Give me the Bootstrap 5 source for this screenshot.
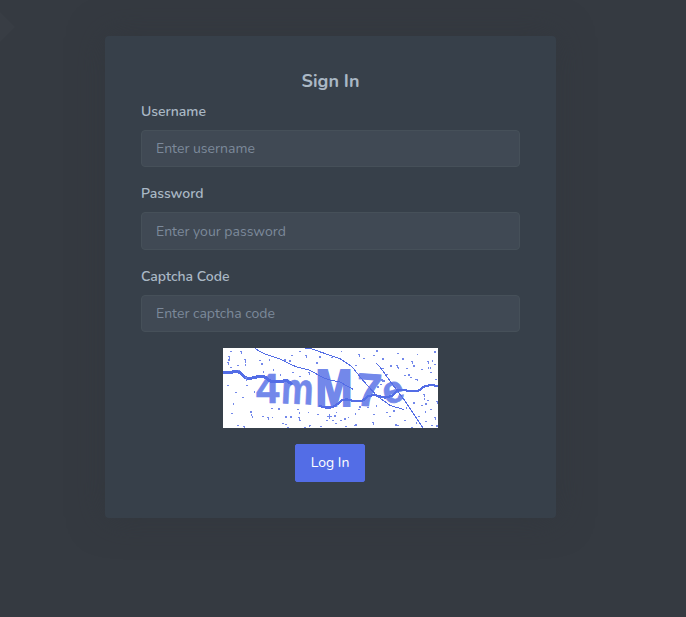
<!DOCTYPE html>
<html lang="en">
<head>
<meta charset="utf-8">
<meta name="viewport" content="width=device-width, initial-scale=1">
<title>Sign In</title>
<link href="https://cdn.jsdelivr.net/npm/bootstrap@5.3.0/dist/css/bootstrap.min.css" rel="stylesheet">
<style>
body{background:#353a41;color:#aab8c5;font-family:Nunito,Lato,"Open Sans",sans-serif;font-size:14px;min-height:617px;overflow:hidden}
/* faint diamond of the backdrop pattern */
body::before{content:"";position:absolute;left:0;top:0;width:16px;height:42px;background:#383d44;clip-path:polygon(0 12px,15px 27px,0 42px)}
.login-card{width:451px;height:482px;margin:36px 0 0 105px;padding:36px;background:#37404a;border:0;border-radius:4px;box-shadow:0 0 35px 0 rgba(49,54,60,.65)}
.login-title{font-size:18px;font-weight:700;line-height:18px;margin-bottom:11px}
.login-card .form-label{line-height:21.6px;margin-bottom:7.4px;display:block;color:#aab8c5;font-weight:600}
.login-card .form-control{height:37.5px;background:#404954;border-color:#465059;color:#e3eaef;font-size:14px;padding:6px 14px;border-radius:4px}
.login-card .form-control::placeholder{color:#8391a2;opacity:.9}
.captcha{width:215px;height:80px;background:#fff}
.btn-login{--bs-btn-bg:#536de6;--bs-btn-border-color:#536de6;--bs-btn-color:#fff;--bs-btn-hover-bg:#475dc4;--bs-btn-hover-color:#fff;width:70px;height:38px;font-size:14px;padding:0 0 1px;border-radius:2px;margin-right:1px}
</style>
</head>
<body>
<main class="card login-card">
<h4 class="login-title text-center">Sign In</h4>
<form>
<div class="mb-3"><label class="form-label" for="user">Username</label><input class="form-control" id="user" type="text" placeholder="Enter username"></div>
<div class="mb-3"><label class="form-label" for="pass">Password</label><input class="form-control" id="pass" type="password" placeholder="Enter your password"></div>
<div class="mb-3"><label class="form-label" for="code">Captcha Code</label><input class="form-control" id="code" type="text" placeholder="Enter captcha code"></div>
<div class="d-flex flex-column align-items-center gap-3">
<svg class="captcha" viewBox="0 0 215 80" role="img" aria-label="Captcha">
<g fill="#7388ea" font-family="Liberation Sans, sans-serif" font-weight="700" stroke="#7388ea" stroke-width=".6">
<text transform="translate(33 55)" font-size="42">4</text>
<text transform="translate(57.5 55) rotate(3) scale(.83 1)" font-size="44">m</text>
<text transform="translate(92.5 58) scale(.87 1)" font-size="51" stroke-width="2">M</text>
<text transform="translate(132.5 57) rotate(4) scale(.98 1)" font-size="46" stroke-width="1.2">7</text>
<text transform="translate(163 57) rotate(-16)" font-size="38">e</text>
</g>
<g fill="none" stroke="#536de6" stroke-linejoin="round" shape-rendering="crispEdges">
<path stroke-width="3" d="M0 24.7H7L13 23L17 24.7L23 30L28 30.3L35 28.7L41 28.3L48 33.7L57 34L63 32.3L69 36.3"/>
<path stroke-width="2.2" d="M96 58L103 59.5H108L112 58L119 52.3L124 51.3L132 53.3H139L145 48L152 47L162 49.7L169 48L175 42.3L180 41.7L187 43.3L195 43L202 38L209 37L215 38.3"/>
<path d="M32 0L36 3L42 6L58 11.3L65 15L73 18.7L87 22.3L100 29.7L107 32L117 34L130 41.3M82 0L88 .7L110 8.3L117 10.7L129 18.7L139 31.3L154 48L167 57.3L181 61.7M153 14.7L157 19L167 33L182 53L200 80"/>
</g>
<g fill="none" stroke="#7388ea" shape-rendering="crispEdges">
<path stroke-width="1" d="M7 3.5h2M17 3.5h1v2M5 8.5h1v2M4 14.5h1v2M36 12.5h2M21 11.5h1v3M7 19.5h2M14 17.5h2M68 7.5h2M76 3.5h2M82 7.5h1v2M97 3.5h1M93 15.5h2M69 24.5h2M85 24.5h1v2M76 28.5h2M15 22.5h2M22 29.5h1v3M4 37.5h2M23 37.5h2M12 44.5h2M19 49.5h2M8 65.5h2M39 68.5h2M20 78.5h1M14 77.5h2M44 69.5h1v2M48 60.5h2M49 69.5h1M62 76.5h2M74 61.5h2M75 69.5h1v2M76 72.5h2M85 64.5h1M94 66.5h2M104 68.5h5M106.5 66v5M97 78.5h2M86 77.5h2M103 72.5h2M64 79.5h2M81 79.5h2M59 75.5h2M108 9.5h2M118 3.5h1M132 17.5h2M135 6.5h1v2M140 10.5h2M150 7.5h2M159 20.5h2M163 26.5h2M173 17.5h1v2M174 5.5h2M183 20.5h2M188 13.5h1v2M194 6.5h1M198 21.5h2M204 13.5h1v2M211 16.5h2M207 24.5h2M187 29.5h2M192 31.5h2M181 27.5h2M212 31.5h2M159 33.5h1M157 36.5h2M200 46.5h1v2M204 52.5h2M213 53.5h1v2M198 57.5h2M207 61.5h2M195 68.5h2M211 69.5h1v2M202 73.5h2M208 77.5h2M188 79.5h2M181 72.5h2M174 77.5h2M166 68.5h2M163 64.5h2M150 66.5h2M149 74.5h1v2M144 59.5h2M135 61.5h2M131 77.5h2M122 78.5h2M125 69.5h1M117 72.5h2M112 75.5h2M113 64.5h1M109 72.5h2"/>
<path stroke-width="2" d="M5 12h2M22 17h1M38 16h2M61 12h2M66 13h2M46 12h1M96 9h2M93 15h2M27 64h2M28 67h1M29 69h1M55 61h2M67 69h2M62 69h2M21 79h1M76 65h1M86 78h1M153 3h2M159 11h2M167 18h2M179 11h2M175 20h1M185 27h2M194 32h1M190 18h2M209 13h1M211 4h2M205 20h1M207 20h1M158 32h2M153 35h2M160 33h2M154 39h2M201 51h1M202 56h2M190 55h2M170 63h2M183 60h1M193 75h1M172 77h2M132 77h2M132 66h1M121 71h2M111 68h2M136 59h2M141 57h2M153 58h1M213 78h2M202 64h1M31 44h1M10 56h1M40 24h1M50 22h1M57 27h1"/>
</g>
</svg>
<button class="btn btn-login" type="button">Log In</button>
</div>
</form>
</main>
<script src="https://cdn.jsdelivr.net/npm/bootstrap@5.3.0/dist/js/bootstrap.bundle.min.js"></script>
</body>
</html>
